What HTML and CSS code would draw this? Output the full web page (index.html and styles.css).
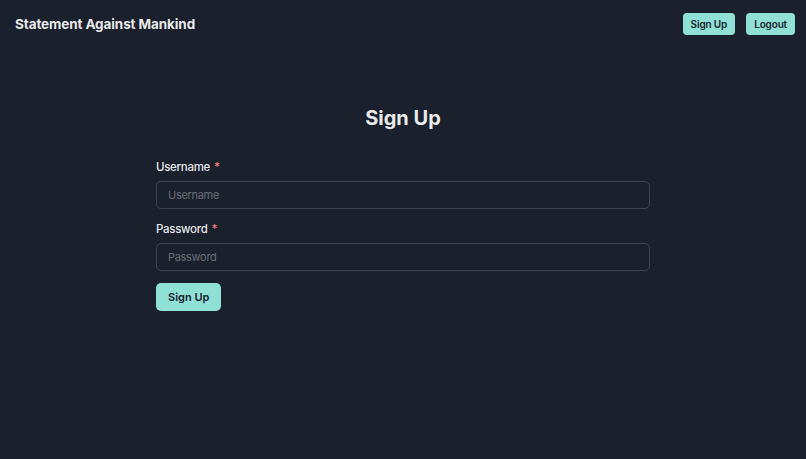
FILE: index.html
```html
<!DOCTYPE html>
<html lang="en">
<head>
<meta charset="utf-8">
<title>Sign Up - Statement Against Mankind</title>
<link rel="stylesheet" href="styles.css">
</head>
<body>
<header class="topbar">
  <div class="brand">Statement Against Mankind</div>
  <nav class="nav">
    <button class="btn btn-xs">Sign Up</button>
    <button class="btn btn-xs">Logout</button>
  </nav>
</header>
<main class="page">
  <h1 class="title">Sign Up</h1>
  <form class="form">
    <div class="field">
      <label class="label" for="username">Username<span class="req">*</span></label>
      <input class="input" id="username" type="text" placeholder="Username">
    </div>
    <div class="field">
      <label class="label" for="password">Password<span class="req">*</span></label>
      <input class="input" id="password" type="password" placeholder="Password">
    </div>
    <button type="button" class="btn btn-sm">Sign Up</button>
  </form>
</main>
</body>
</html>
```
FILE: styles.css
```css
* { box-sizing: border-box; }
html, body { margin: 0; padding: 0; }
body {
  background: #1a202c;
  color: rgba(255,255,255,0.92);
  font-family: Inter, "Noto Sans", sans-serif;
  min-height: 459px;
}
.topbar {
  display: flex;
  align-items: center;
  justify-content: space-between;
  height: 48px;
  padding: 0 11px 0 15px;
}
.brand {
  font-weight: 700;
  font-size: 13.5px;
  letter-spacing: -0.1px;
  color: rgba(255,255,255,0.92);
}
.nav {
  display: flex;
  gap: 11px;
}
.btn {
  border: none;
  background: #8fe1d6;
  color: #1a202c;
  font-family: Inter, "Noto Sans", sans-serif;
  font-weight: 600;
  cursor: pointer;
}
.btn-xs {
  height: 22px;
  padding: 0 8px;
  font-size: 10px;
  letter-spacing: -0.15px;
  border-radius: 4px;
}
.page {
  padding-top: 57px;
}
.title {
  margin: 0 0 28px;
  text-align: center;
  font-size: 20px;
  font-weight: 700;
  line-height: 26px;
  color: rgba(255,255,255,0.92);
}
.form {
  width: 494px;
  margin: 0 auto;
  display: flex;
  flex-direction: column;
  align-items: flex-start;
}
.field {
  width: 100%;
  margin-bottom: 12px;
}
.label {
  display: block;
  font-size: 11.5px;
  font-weight: 500;
  letter-spacing: -0.3px;
  line-height: 16px;
  margin-bottom: 6px;
}
.req {
  color: #fc8181;
  margin-left: 4px;
}
.input {
  display: block;
  width: 100%;
  height: 28px;
  padding: 0 11px;
  background: transparent;
  border: 1px solid rgba(255,255,255,0.16);
  border-radius: 5px;
  color: rgba(255,255,255,0.92);
  font-family: Inter, "Noto Sans", sans-serif;
  font-size: 11px;
  letter-spacing: -0.3px;
  outline: none;
}
.input::placeholder { color: rgba(255,255,255,0.36); }
.btn-sm {
  height: 28px;
  padding: 0 12px;
  font-size: 11px;
  border-radius: 5px;
}
```
